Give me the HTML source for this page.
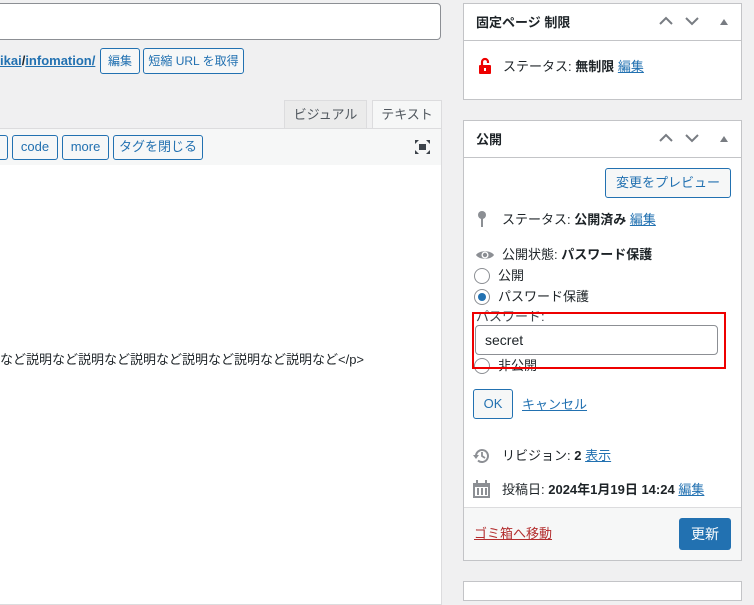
<!DOCTYPE html>
<html><head><meta charset="utf-8"><style>
*{box-sizing:border-box;margin:0;padding:0}
body{width:754px;height:588px;overflow:hidden;background:#f0f0f1;font-family:"Liberation Sans","Noto Sans CJK JP",sans-serif;font-size:13px;line-height:1.25;color:#1d2327;position:relative}
.a{position:absolute}
a{color:#2271b1;text-decoration:underline}
.btn{position:absolute;border:1px solid #2271b1;border-radius:3px;background:#f6f7f7;color:#2271b1;font-size:12px;display:flex;align-items:center;justify-content:center}
.box{position:absolute;left:463px;width:279px;background:#fff;border:1px solid #c3c4c7}
.hd{height:37px;border-bottom:1px solid #c3c4c7;font-weight:bold;font-size:13px;padding:11px 0 0 12px;position:relative}
.ar{position:absolute;top:12px}
.radio{position:absolute;width:16px;height:16px;border:1px solid #8c8f94;border-radius:50%;background:#fff}
</style></head><body>
<div class="a" style="left:-5px;top:3px;width:446px;height:37px;background:#fff;border:1px solid #8c8f94;border-radius:4px"></div>
<div class="a" style="left:0;top:53px;font-size:13px;font-weight:bold"><a>ikai</a>/<a>infomation/</a></div>
<div class="btn" style="left:100px;top:48px;width:40px;height:26px">編集</div>
<div class="btn" style="left:143px;top:48px;width:101px;height:26px">短縮 URL を取得</div>
<div class="a" style="left:284px;top:100px;width:83px;height:29px;background:#ebebeb;border:1px solid #dcdcde;color:#50575e;text-align:center;line-height:27px">ビジュアル</div>
<div class="a" style="left:372px;top:100px;width:70px;height:29px;background:#f6f7f7;border:1px solid #dcdcde;border-bottom:none;color:#50575e;text-align:center;line-height:27px">テキスト</div>
<div class="a" style="left:-2px;top:128px;width:444px;height:38px;background:#f6f7f7;border:1px solid #dcdcde"></div>
<div class="btn" style="left:-5px;top:135px;width:13px;height:25px"></div>
<div class="btn" style="left:12px;top:135px;width:46px;height:25px;font-size:13px">code</div>
<div class="btn" style="left:62px;top:135px;width:47px;height:25px;font-size:13px">more</div>
<div class="btn" style="left:113px;top:135px;width:90px;height:25px;font-size:13px">タグを閉じる</div>
<svg class="a" style="left:414px;top:139px" width="17" height="16" viewBox="0 0 17 16"><path d="M1 1h4L1 5zM16 1h-4l4 4zM1 15h4l-4-4zM16 15h-4l4-4z" fill="#3c434a"/><rect x="5" y="5" width="7" height="6" fill="#3c434a"/></svg>
<div class="a" style="left:-2px;top:165px;width:444px;height:440px;background:#fff;border:1px solid #dcdcde;border-top:none"></div>
<div class="a" style="left:0;top:352px;font-size:13px">など説明など説明など説明など説明など説明など説明など&lt;/p&gt;</div>

<div class="box" style="top:3px;height:97px">
<div class="hd">固定ページ 制限
<svg class="ar" style="left:195px" width="14" height="10" viewBox="0 0 14 10"><path d="M1 8l6-6 6 6" fill="none" stroke="#787c82" stroke-width="2"/></svg>
<svg class="ar" style="left:221px" width="14" height="10" viewBox="0 0 14 10"><path d="M1 2l6 6 6-6" fill="none" stroke="#787c82" stroke-width="2"/></svg>
<svg class="ar" style="left:256px;top:15px" width="8" height="6" viewBox="0 0 8 6"><path d="M0 6L4 0l4 6z" fill="#787c82"/></svg></div>
<svg class="a" style="left:15px;top:53px" width="12" height="18" viewBox="0 0 12 18"><path d="M3 8V5a3 3 0 0 1 6 0v1" fill="none" stroke="#e00" stroke-width="2.2"/><rect x="0" y="8" width="12" height="9" rx="1" fill="#e00"/><rect x="5" y="11" width="2" height="3" fill="#fff"/></svg>
<div class="a" style="left:39px;top:55px">ステータス: <b>無制限</b> <a>編集</a></div>
</div>

<div class="box" style="top:120px;height:441px">
<div class="hd">公開
<svg class="ar" style="left:195px" width="14" height="10" viewBox="0 0 14 10"><path d="M1 8l6-6 6 6" fill="none" stroke="#787c82" stroke-width="2"/></svg>
<svg class="ar" style="left:221px" width="14" height="10" viewBox="0 0 14 10"><path d="M1 2l6 6 6-6" fill="none" stroke="#787c82" stroke-width="2"/></svg>
<svg class="ar" style="left:256px;top:15px" width="8" height="6" viewBox="0 0 8 6"><path d="M0 6L4 0l4 6z" fill="#787c82"/></svg></div>
<div class="btn" style="left:141px;top:47px;width:126px;height:30px;font-size:13px">変更をプレビュー</div>
<svg class="a" style="left:13px;top:89px" width="10" height="18" viewBox="0 0 10 18"><circle cx="5" cy="5" r="4" fill="#8c8f94"/><rect x="4" y="8" width="2" height="9" fill="#8c8f94"/></svg>
<div class="a" style="left:38px;top:91px">ステータス: <b>公開済み</b> <a>編集</a></div>
<svg class="a" style="left:11px;top:127px" width="20" height="14" viewBox="0 0 20 14"><path d="M1 7C4 2 16 2 19 7C16 12 4 12 1 7z" fill="#8c8f94"/><circle cx="10" cy="7" r="3.5" fill="#fff"/><circle cx="10" cy="7" r="2.2" fill="#8c8f94"/></svg>
<div class="a" style="left:38px;top:126px">公開状態: <b>パスワード保護</b></div>
<div class="radio" style="left:10px;top:147px"></div>
<div class="a" style="left:34px;top:147px">公開</div>
<div class="radio" style="left:10px;top:168px"><div style="width:8px;height:8px;border-radius:50%;background:#2271b1;margin:3px"></div></div>
<div class="a" style="left:34px;top:168px">パスワード保護</div>
<div class="a" style="left:12px;top:188px;color:#3c434a">パスワード:</div>
<div class="radio" style="left:10px;top:237px"></div>
<div class="a" style="left:34px;top:237px">非公開</div>
<div class="a" style="left:11px;top:204px;width:243px;height:30px;border:1px solid #8c8f94;border-radius:4px;background:#fff;padding:6px 9px;font-size:14px">secret</div>
<div class="a" style="left:8px;top:191px;width:254px;height:57px;border:2px solid #e00"></div>
<div class="btn" style="left:9px;top:268px;width:40px;height:30px;font-size:13px">OK</div>
<div class="a" style="left:58px;top:276px"><a>キャンセル</a></div>
<svg class="a" style="left:9px;top:326px" width="18" height="18" viewBox="0 0 18 18"><path d="M3 9a6 6 0 1 1 2 4.5" fill="none" stroke="#8c8f94" stroke-width="2"/><path d="M0 8h6L3 12z" fill="#8c8f94"/><path d="M9 5v4l3 2" fill="none" stroke="#8c8f94" stroke-width="1.8"/></svg>
<div class="a" style="left:38px;top:327px">リビジョン: <b>2</b> <a>表示</a></div>
<svg class="a" style="left:9px;top:359px" width="17" height="18" viewBox="0 0 17 18"><rect x="0" y="3" width="17" height="15" fill="#8c8f94"/><rect x="2" y="7" width="13" height="9" fill="#fff"/><rect x="4" y="8" width="2" height="7" fill="#8c8f94"/><rect x="8" y="8" width="2" height="7" fill="#8c8f94"/><rect x="12" y="8" width="2" height="7" fill="#8c8f94"/><rect x="3" y="0" width="2" height="4" fill="#8c8f94"/><rect x="12" y="0" width="2" height="4" fill="#8c8f94"/></svg>
<div class="a" style="left:38px;top:361px">投稿日: <b>2024年1月19日 14:24</b> <a>編集</a></div>
<div class="a" style="left:0;top:386px;width:277px;height:53px;background:#f6f7f7;border-top:1px solid #dcdcde"></div>
<div class="a" style="left:10px;top:405px"><a style="color:#b32d2e">ゴミ箱へ移動</a></div>
<div class="a" style="left:215px;top:397px;width:52px;height:32px;background:#2271b1;border-radius:3px;color:#fff;text-align:center;line-height:32px;font-size:14px">更新</div>
</div>
<div class="a" style="left:463px;top:581px;width:279px;height:20px;background:#fff;border:1px solid #c3c4c7"></div>
</body></html>
